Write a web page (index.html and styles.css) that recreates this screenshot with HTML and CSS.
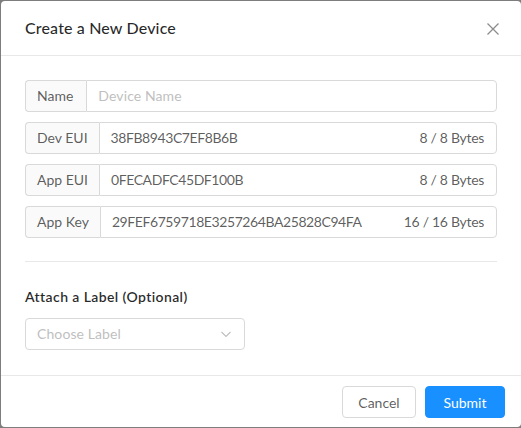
FILE: index.html
```html
<!DOCTYPE html>
<html>
<head>
<meta charset="utf-8">
<link rel="stylesheet" href="styles.css">
</head>
<body>
<div class="modal">
  <div class="modal-header">
    <div class="modal-title">Create a New Device</div>
    <button class="modal-close" aria-label="Close">
      <svg width="14" height="14" viewBox="0 0 14 14"><path d="M1.5 1.5L12.5 12.5M12.5 1.5L1.5 12.5" stroke="currentColor" stroke-width="1.3" fill="none"/></svg>
    </button>
  </div>
  <div class="modal-body">
    <div class="fields">
      <div class="input-group">
        <span class="addon addon-name">Name</span>
        <span class="input"><span class="placeholder">Device Name</span></span>
      </div>
      <div class="input-group">
        <span class="addon">Dev EUI</span>
        <span class="input"><span class="value">38FB8943C7EF8B6B</span><span class="suffix">8 / 8 Bytes</span></span>
      </div>
      <div class="input-group">
        <span class="addon">App EUI</span>
        <span class="input"><span class="value">0FECADFC45DF100B</span><span class="suffix">8 / 8 Bytes</span></span>
      </div>
      <div class="input-group">
        <span class="addon">App Key</span>
        <span class="input"><span class="value">29FEF6759718E3257264BA25828C94FA</span><span class="suffix">16 / 16 Bytes</span></span>
      </div>
    </div>
    <div class="divider"></div>
    <div class="label">Attach a Label (Optional)</div>
    <div class="select">
      <span class="placeholder">Choose Label</span>
      <svg class="chevron" width="12" height="12" viewBox="0 0 12 12"><path d="M1.5 4L6 8.5L10.5 4" stroke="currentColor" stroke-width="1.1" fill="none"/></svg>
    </div>
  </div>
  <div class="modal-footer">
    <button class="btn btn-cancel">Cancel</button>
    <button class="btn btn-primary">Submit</button>
  </div>
</div>
</body>
</html>
```

FILE: styles.css
```css
* { box-sizing: border-box; }
html, body { margin: 0; padding: 0; }
body {
  background: #7d7d7d;
  width: 521px;
  height: 428px;
  padding: 1px 0 1px 1px;
  font-family: Lato, "Open Sans", sans-serif;
  font-size: 14px;
  line-height: 22px;
  color: rgba(0,0,0,0.65);
  overflow: hidden;
}
.modal {
  background: #fff;
  border-radius: 4px;
  width: 520px;
  height: 426px;
  display: flex;
  flex-direction: column;
}
.modal-header {
  position: relative;
  padding: 16px 24px;
  border-bottom: 1px solid #e8e8e8;
}
.modal-title {
  font-size: 16px;
  line-height: 22px;
  font-weight: 500;
  letter-spacing: 0.15px;
  color: rgba(0,0,0,0.85);
}
.modal-close {
  position: absolute;
  top: 0;
  right: 0;
  width: 56px;
  height: 55px;
  border: 0;
  background: transparent;
  color: rgba(0,0,0,0.45);
  display: flex;
  align-items: center;
  justify-content: center;
  padding: 0;
}
.modal-body {
  padding: 24px;
}
.fields {
  display: flex;
  flex-direction: column;
  gap: 10px;
}
.input-group {
  display: flex;
  height: 32px;
}
.addon {
  background: #fafafa;
  border: 1px solid #d9d9d9;
  border-right: 0;
  border-radius: 4px 0 0 4px;
  padding: 4px 11px;
  color: rgba(0,0,0,0.65);
  white-space: nowrap;
}
.addon-name { padding-right: 13px; }
.input {
  flex: 1;
  display: flex;
  justify-content: space-between;
  border: 1px solid #d9d9d9;
  border-radius: 0 4px 4px 0;
  padding: 4px 12px 4px 11px;
  white-space: nowrap;
}
.placeholder { color: #bfbfbf; letter-spacing: 0.1px; }
.value { color: rgba(0,0,0,0.65); letter-spacing: -0.42px; }
.suffix { color: rgba(0,0,0,0.65); letter-spacing: -0.3px; }
.divider {
  height: 1px;
  background: #e8e8e8;
  margin: 23px 0 24px;
}
.label {
  color: rgba(0,0,0,0.85);
  font-weight: 600;
  letter-spacing: 0.4px;
  margin-bottom: 10px;
}
.select {
  width: 220px;
  height: 32px;
  border: 1px solid #d9d9d9;
  border-radius: 4px;
  padding: 4px 11px 4px 11px;
  display: flex;
  align-items: center;
  justify-content: space-between;
}
.chevron { color: #bfbfbf; margin-right: 1px; }
.modal-footer {
  margin-top: auto;
  border-top: 1px solid #e8e8e8;
  padding: 10px 16px 9px;
  display: flex;
  justify-content: flex-end;
  gap: 9px;
}
.btn {
  height: 32px;
  padding: 0;
  font-family: inherit;
  font-size: 14px;
  border: 1px solid #d9d9d9;
  border-radius: 4px;
  background: #fff;
  color: rgba(0,0,0,0.65);
}
.btn-cancel { width: 74px; }
.btn-primary {
  width: 80px;
  background: #1890ff;
  border-color: #1890ff;
  color: #fff;
}
```
